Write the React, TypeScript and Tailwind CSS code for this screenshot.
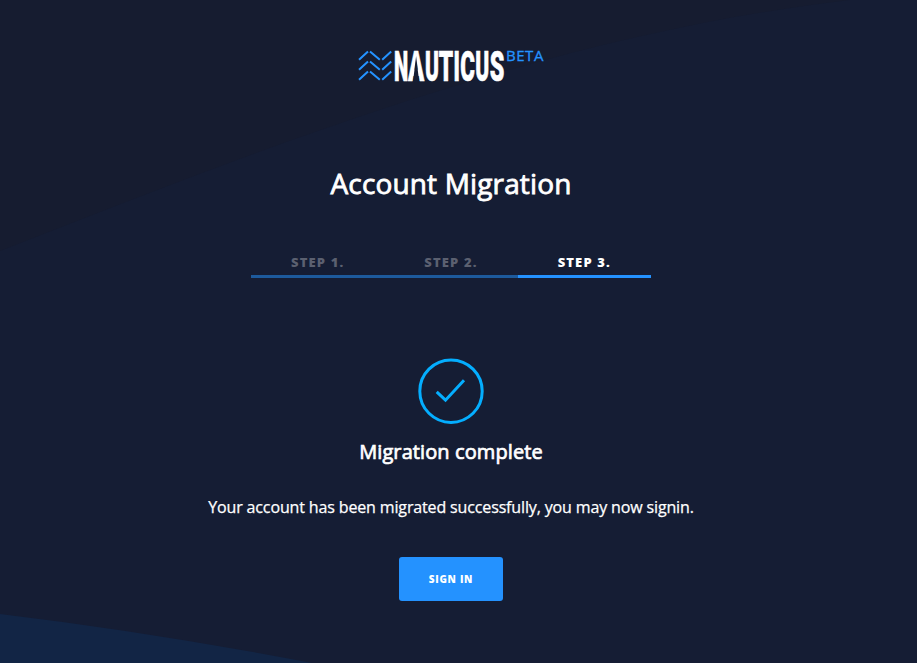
const steps = [
  { label: "STEP 1.", active: false },
  { label: "STEP 2.", active: false },
  { label: "STEP 3.", active: true },
];

const wordmark = [
  { ch: "N", x: 394, w: 14.2 },
  { ch: "A", x: 408, w: 16.2 },
  { ch: "U", x: 425, w: 14 },
  { ch: "T", x: 438.8, w: 14.4 },
  { ch: "I", x: 453.4, w: 6.4 },
  { ch: "C", x: 460.2, w: 14.6 },
  { ch: "U", x: 475.2, w: 14 },
  { ch: "S", x: 489.8, w: 14.6 },
];

function Logo() {
  return (
    <svg className="block h-[40px] w-[188px]" viewBox="357 45 188 40" aria-label="Nauticus beta">
      <g stroke="#2492ff" strokeWidth="2" fill="none">
        {[0, 10, 20].map((dy) => (
          <g key={dy} transform={`translate(0 ${dy})`}>
            <path d="M359 59.8 L368 51.4 M370 51.4 L379.8 59.8 M382.2 59.8 L391.2 51.4" />
          </g>
        ))}
      </g>
      <g
        fontSize="42.6"
        fontWeight="900"
        fill="#fff"
        stroke="#fff"
        strokeWidth="0.7"
        className="font-[Roboto,sans-serif]"
      >
        {wordmark.map((l) => (
          <text key={l.x} x={l.x} y="80.8" textLength={l.w} lengthAdjust="spacingAndGlyphs">
            {l.ch}
          </text>
        ))}
      </g>
      <path d="M416.1 56 L419.2 82 H413 Z" fill="#151d33" />
      <text x="506" y="61" fontSize="15" letterSpacing="0.55" fill="#2492ff" stroke="#2492ff" strokeWidth="0.3" className="font-['Open_Sans',sans-serif]">
        BETA
      </text>
    </svg>
  );
}

export default function App() {
  return (
    <div className="relative isolate h-[663px] w-[917px] overflow-hidden bg-[#151d34] font-['Open_Sans',sans-serif] text-white">
      <svg className="absolute inset-0 -z-10" width="917" height="663">
        <path d="M0 0 H850 C550 35 270 145 0 251 Z" fill="#161c30" />
        <path d="M0 614 Q150 632 312 663 H0 Z" fill="#122545" />
      </svg>
      <main className="flex w-[902px] flex-col items-center pt-[45px]">
        <Logo />
        <h1 className="mt-[78px] text-[28px] leading-[40px] tracking-[0.15px] [-webkit-text-stroke:0.8px_white]">
          Account Migration
        </h1>
        <div className="mt-[47px] flex w-[400px]">
          {steps.map((s) => (
            <div
              key={s.label}
              className={`flex h-[28px] flex-1 justify-center border-b-3 text-[13px] leading-[24px] font-extrabold tracking-[1.15px] ${
                s.active ? "border-[#2492ff] text-white" : "border-[#1d5a9c] text-[#5b6070]"
              }`}
            >
              {s.label}
            </div>
          ))}
        </div>
        <svg className="mt-[80px] h-[66px] w-[66px]" viewBox="0 0 66 66" fill="none" stroke="#04aeff" strokeWidth="3">
          <circle cx="33" cy="33.2" r="31.2" />
          <path d="M18.7 33.9 L27.5 42.2 L46 22.2" />
        </svg>
        <h2 className="mt-[14px] text-[20px] leading-[28px] tracking-[0.1px] [-webkit-text-stroke:0.7px_white]">
          Migration complete
        </h2>
        <p className="mt-[29px] text-[16px] leading-[24px] tracking-[-0.14px] [-webkit-text-stroke:0.25px_white]">
          Your account has been migrated successfully, you may now signin.
        </p>
        <button className="mt-[38px] h-[44px] w-[104px] rounded-[3px] bg-[#2492ff] text-[10px] font-extrabold tracking-[0.7px]">
          SIGN IN
        </button>
      </main>
    </div>
  );
}
